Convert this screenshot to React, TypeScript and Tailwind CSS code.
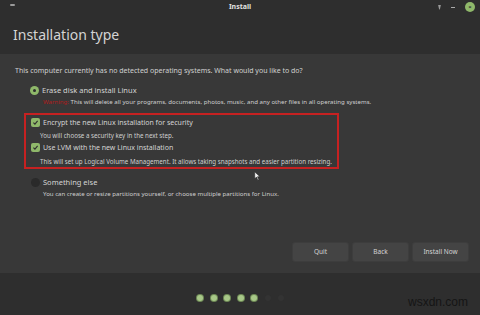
import React from 'react';

function Check() {
    return (
        <span className="flex h-[9px] w-[9px] items-center justify-center rounded-[2px] bg-[#8fb86a]">
            <svg viewBox="0 0 10 10" className="h-[7px] w-[7px]">
                <path d="M2 5.2 L4.2 7.3 L8 2.8" fill="none" stroke="#2e2e2e" strokeWidth="1.6" />
            </svg>
        </span>
    );
}

function Radio({ on }: { on?: boolean }) {
    return on ? (
        <span className="flex h-[9px] w-[9px] items-center justify-center rounded-full bg-[#8fb86a]">
            <span className="h-[3px] w-[3px] rounded-full bg-[#2e2e2e]" />
        </span>
    ) : (
        <span className="h-[9px] w-[9px] rounded-full bg-[#2a2a2a]" />
    );
}

export default function App() {
    return (
        <div className="flex h-[315px] w-[480px] flex-col bg-[#2e2e2e] text-[#cfcfcf]" style={{ fontFamily: '"Noto Sans", sans-serif' }}>
            {/* title bar */}
            <div className="relative flex h-[14px] items-center justify-center">
                <span className="absolute left-[10px] top-[4px] h-[2px] w-[5px] rounded bg-[#9a9a9a]" />
                <span className="text-[7px] font-bold text-[#e0e0e0]">Install</span>
                <div className="absolute right-[5px] top-[2px] flex items-center gap-[10px]">
                    <span className="h-[5px] w-[3px] bg-[#9a9a9a] [clip-path:polygon(0_0,100%_0,60%_100%,40%_100%)]" />
                    <span className="h-[1px] w-[4px] bg-[#aaa]" />
                    <span className="flex h-[10px] w-[10px] items-center justify-center rounded-full bg-[#8fb86a]">
                        <span className="text-[6px] leading-none font-bold text-[#2e2e2e]">×</span>
                    </span>
                </div>
            </div>

            {/* header */}
            <div className="flex h-[40px] items-center px-[13px]">
                <h1 className="text-[14px] text-[#d4d4d4]">Installation type</h1>
            </div>

            {/* content */}
            <div className="relative flex h-[219px] flex-col bg-[#383838] px-[15px] pt-[12px]">
                <p className="text-[7px] text-[#d0d0d0]">This computer currently has no detected operating systems. What would you like to do?</p>

                <div className="mt-[8px] ml-[15px] flex items-center gap-[3px]">
                    <Radio on />
                    <span className="text-[7.5px] text-[#d4d4d4]">Erase disk and install Linux</span>
                </div>
                <p className="ml-[28px] mt-[1px] text-[6.1px] text-[#cfcfcf]">
                    <span className="text-[#b01c1c]">Warning:</span> This will delete all your programs, documents, photos, music, and any other files in all operating systems.
                </p>

                <div className="mt-[7px] ml-[9px] w-[315px] border-2 border-[#c62121] pl-[5px] pt-[3px] pb-[1px]">
                    <div className="flex h-[10px] items-center gap-[3px]">
                        <Check />
                        <span className="text-[7px] text-[#d4d4d4]">Encrypt the new Linux installation for security</span>
                    </div>
                    <p className="ml-[9px] mt-[4px] h-[8px] text-[6.2px] leading-[8px] text-[#cfcfcf]">You will choose a security key in the next step.</p>
                    <div className="mt-[3px] flex h-[10px] items-center gap-[3px]">
                        <Check />
                        <span className="text-[7px] text-[#d4d4d4]">Use LVM with the new Linux installation</span>
                    </div>
                    <p className="ml-[9px] mt-[5px] h-[8px] text-[6.2px] leading-[8px] text-[#cfcfcf]">This will set up Logical Volume Management. It allows taking snapshots and easier partition resizing.</p>
                </div>

                <div className="mt-[8px] ml-[16px] flex items-center gap-[3px]">
                    <Radio />
                    <span className="text-[7.5px] text-[#d4d4d4]">Something else</span>
                </div>
                <p className="ml-[28px] mt-[1px] text-[6.1px] text-[#cfcfcf]">You can create or resize partitions yourself, or choose multiple partitions for Linux.</p>

                <div className="mt-auto mb-[12px] -mr-[3px] flex justify-end gap-[5px]">
                    {['Quit', 'Back', 'Install Now'].map((b) => (
                        <button key={b} className="h-[18px] w-[55px] rounded-[2px] bg-[#444] text-[6.5px] text-[#d4d4d4] shadow-[0_0_0_1px_#3d3d3d]">
                            {b}
                        </button>
                    ))}
                </div>

                {/* mouse cursor */}
                <svg viewBox="0 0 10 14" className="absolute left-[254px] top-[117px] h-[10px] w-[7px]">
                    <path d="M1 1 L1 11 L3.5 8.5 L5.5 13 L7 12.3 L5 8 L8.5 8 Z" fill="#eee" stroke="#222" strokeWidth="0.8" />
                </svg>
            </div>

            {/* progress dots */}
            <div className="relative flex flex-1 items-center justify-center">
                <div className="ml-[1px] mt-[7px] flex gap-[7.5px]">
                    {[0, 1, 2, 3, 4].map((i) => (
                        <span key={i} className="h-[6px] w-[6px] rounded-full bg-[#a8c888] shadow-[0_0_0_1px_#6f8a57]" />
                    ))}
                    <span className="h-[6px] w-[6px] rounded-full bg-[#333]" />
                    <span className="h-[6px] w-[6px] rounded-full bg-[#333]" />
                </div>
                <span className="absolute right-[12px] bottom-[4px] text-[12px] text-[#151515]" style={{ fontFamily: '"Liberation Sans", sans-serif' }}>wsxdn.com</span>
            </div>
        </div>
    );
}
